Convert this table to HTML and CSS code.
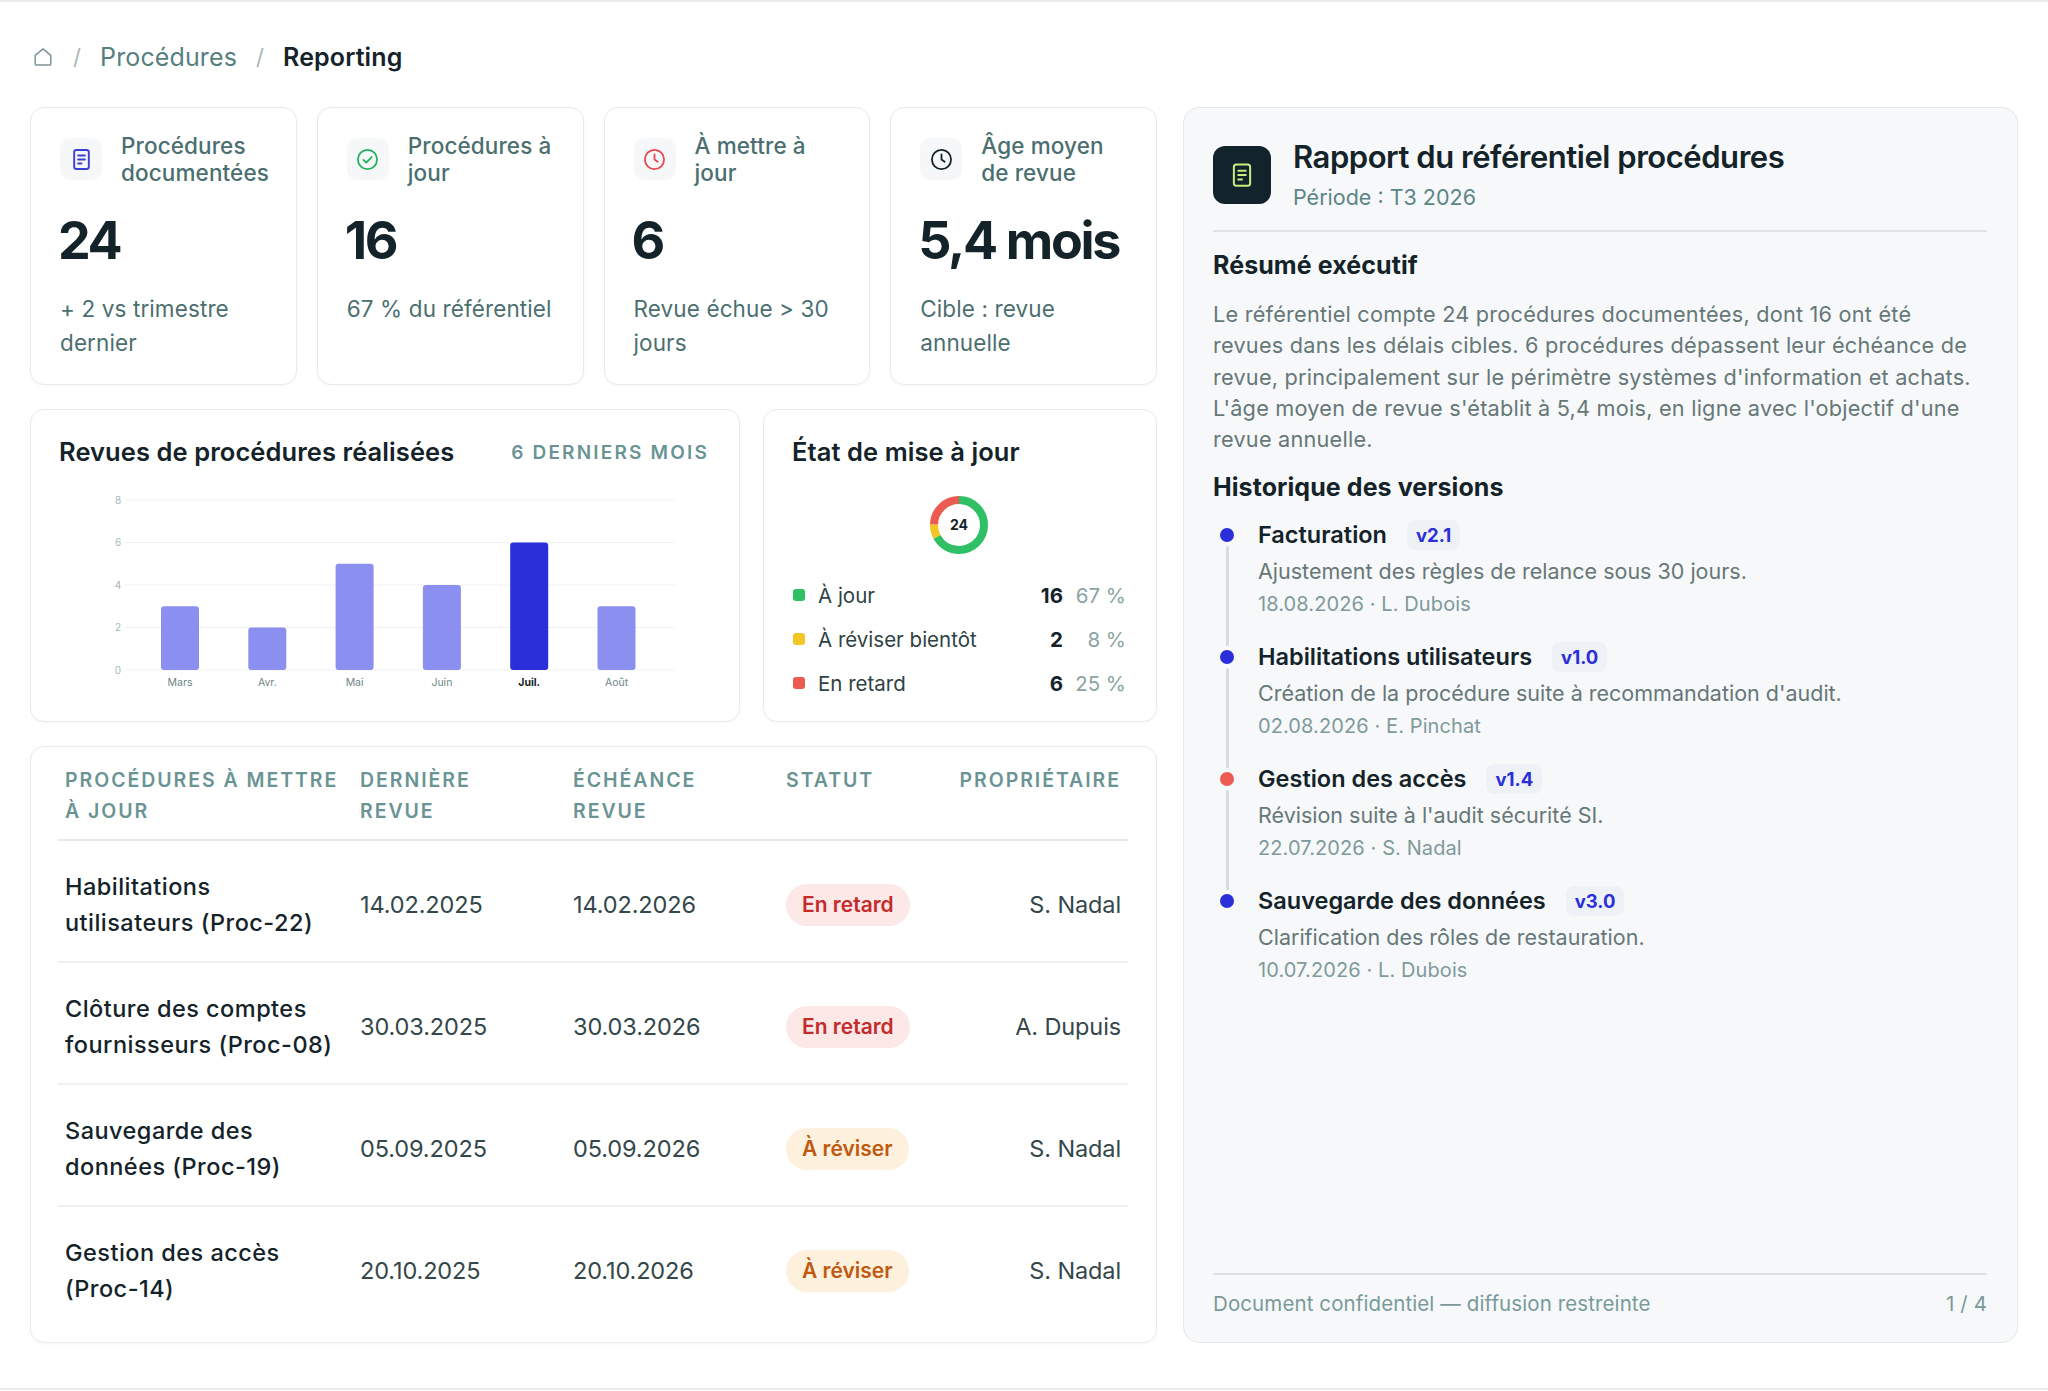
FILE: index.html
```html
<!DOCTYPE html>
<html lang="fr">
<head>
<meta charset="utf-8">
<title>Reporting — Procédures</title>
<link rel="stylesheet" href="styles.css">
</head>
<body>
<div class="page">
  <nav class="crumbs">
    <svg class="home" viewBox="0 0 24 24" width="22" height="22" fill="none" stroke="#7d9494" stroke-width="1.6" stroke-linejoin="round"><path d="M3.5 10.2 12 3.2l8.5 7V19.5a1.3 1.3 0 0 1-1.3 1.3H4.8a1.3 1.3 0 0 1-1.3-1.3Z"/></svg>
    <span class="sep">/</span>
    <span class="crumb">Procédures</span>
    <span class="sep">/</span>
    <span class="crumb current">Reporting</span>
  </nav>

  <div class="layout">
    <div class="main">
      <div class="kpis">
        <div class="card kpi">
          <div class="kpi-head">
            <span class="kpi-icon">
              <svg viewBox="0 0 24 24" width="27" height="27" fill="none" stroke="#3b3fd8" stroke-width="1.7" stroke-linecap="round"><rect x="5.5" y="3.5" width="13" height="17" rx="2"/><path d="M9 8.5h6M9 12h6M9 15.5h3"/></svg>
            </span>
            <span class="kpi-label">Procédures<br>documentées</span>
          </div>
          <div class="kpi-value">24</div>
          <div class="kpi-sub">+ 2 vs trimestre<br>dernier</div>
        </div>
        <div class="card kpi">
          <div class="kpi-head">
            <span class="kpi-icon">
              <svg viewBox="0 0 24 24" width="27" height="27" fill="none" stroke="#22b35a" stroke-width="1.6" stroke-linecap="round" stroke-linejoin="round"><circle cx="12" cy="12" r="8.5"/><path d="m8.4 12.3 2.5 2.5 4.8-5"/></svg>
            </span>
            <span class="kpi-label">Procédures à<br>jour</span>
          </div>
          <div class="kpi-value">16</div>
          <div class="kpi-sub">67 % du référentiel</div>
        </div>
        <div class="card kpi">
          <div class="kpi-head">
            <span class="kpi-icon">
              <svg viewBox="0 0 24 24" width="27" height="27" fill="none" stroke="#e5484d" stroke-width="1.6" stroke-linecap="round" stroke-linejoin="round"><circle cx="12" cy="12" r="8.5"/><path d="M12 7.5V12l2.8 2"/></svg>
            </span>
            <span class="kpi-label">À mettre à<br>jour</span>
          </div>
          <div class="kpi-value">6</div>
          <div class="kpi-sub">Revue échue &gt; 30<br>jours</div>
        </div>
        <div class="card kpi">
          <div class="kpi-head">
            <span class="kpi-icon">
              <svg viewBox="0 0 24 24" width="27" height="27" fill="none" stroke="#142329" stroke-width="1.6" stroke-linecap="round" stroke-linejoin="round"><circle cx="12" cy="12" r="8.5"/><path d="M12 7.5V12l2.8 2"/></svg>
            </span>
            <span class="kpi-label">Âge moyen<br>de revue</span>
          </div>
          <div class="kpi-value">5,4 mois</div>
          <div class="kpi-sub">Cible : revue<br>annuelle</div>
        </div>
      </div>

      <div class="charts">
        <section class="card chart-card">
          <div class="card-head">
            <h2 class="card-title">Revues de procédures réalisées</h2>
            <span class="card-tag">6 derniers mois</span>
          </div>
          <svg class="bars" viewBox="0 0 650 210" width="650" height="210">
            <g class="grid" stroke="#eef1f3" stroke-width="1">
              <line x1="66" y1="14" x2="616" y2="14"/>
              <line x1="66" y1="56.5" x2="616" y2="56.5"/>
              <line x1="66" y1="99" x2="616" y2="99"/>
              <line x1="66" y1="141.5" x2="616" y2="141.5"/>
              <line x1="66" y1="184" x2="616" y2="184"/>
            </g>
            <g class="ylab" font-size="10" fill="#a9b6b6" text-anchor="middle">
              <text x="59" y="17.5">8</text>
              <text x="59" y="60">6</text>
              <text x="59" y="102.5">4</text>
              <text x="59" y="145">2</text>
              <text x="59" y="187.5">0</text>
            </g>
            <g fill="#8b8ff0">
              <rect x="102" y="120.25" width="38" height="63.75" rx="3"/>
              <rect x="189.3" y="141.5" width="38" height="42.5" rx="3"/>
              <rect x="276.6" y="77.75" width="38" height="106.25" rx="3"/>
              <rect x="363.9" y="99" width="38" height="85" rx="3"/>
              <rect x="451.2" y="56.5" width="38" height="127.5" rx="3" fill="#2b2fd9"/>
              <rect x="538.5" y="120.25" width="38" height="63.75" rx="3"/>
            </g>
            <g class="xlab" font-size="10.5" fill="#6f8686" text-anchor="middle">
              <text x="121" y="200">Mars</text>
              <text x="208.3" y="200">Avr.</text>
              <text x="295.6" y="200">Mai</text>
              <text x="382.9" y="200">Juin</text>
              <text x="470.2" y="200" fill="#142329" font-weight="700">Juil.</text>
              <text x="557.5" y="200">Août</text>
            </g>
          </svg>
        </section>

        <section class="card status-card">
          <h2 class="card-title">État de mise à jour</h2>
          <div class="donut">
            <svg viewBox="0 0 58 58" width="58" height="58">
              <g transform="rotate(-90 29 29)" fill="none" stroke-width="8">
                <circle cx="29" cy="29" r="25" stroke="#2fbf64" stroke-dasharray="104.72 157.08"/>
                <circle cx="29" cy="29" r="25" stroke="#f2c624" stroke-dasharray="13.09 157.08" stroke-dashoffset="-104.72"/>
                <circle cx="29" cy="29" r="25" stroke="#ec5b52" stroke-dasharray="39.27 157.08" stroke-dashoffset="-117.81"/>
              </g>
              <text x="29" y="34" text-anchor="middle" font-size="14" font-weight="700" fill="#142329">24</text>
            </svg>
          </div>
          <ul class="legend">
            <li><span class="swatch green"></span><span class="lg-label">À jour</span><span class="lg-count">16</span><span class="lg-pct">67 %</span></li>
            <li><span class="swatch yellow"></span><span class="lg-label">À réviser bientôt</span><span class="lg-count">2</span><span class="lg-pct">8 %</span></li>
            <li><span class="swatch red"></span><span class="lg-label">En retard</span><span class="lg-count">6</span><span class="lg-pct">25 %</span></li>
          </ul>
        </section>
      </div>

      <section class="card table-card">
        <table class="procs">
          <colgroup>
            <col class="c-name"><col class="c-date"><col class="c-date"><col class="c-status"><col>
          </colgroup>
          <thead>
            <tr>
              <th>Procédures à mettre<br>à jour</th>
              <th>Dernière<br>revue</th>
              <th>Échéance<br>revue</th>
              <th>Statut</th>
              <th class="right">Propriétaire</th>
            </tr>
          </thead>
          <tbody>
            <tr>
              <td class="name">Habilitations<br>utilisateurs (Proc-22)</td>
              <td>14.02.2025</td>
              <td>14.02.2026</td>
              <td><span class="badge late">En retard</span></td>
              <td class="right">S. Nadal</td>
            </tr>
            <tr>
              <td class="name">Clôture des comptes<br>fournisseurs (Proc-08)</td>
              <td>30.03.2025</td>
              <td>30.03.2026</td>
              <td><span class="badge late">En retard</span></td>
              <td class="right">A. Dupuis</td>
            </tr>
            <tr>
              <td class="name">Sauvegarde des<br>données (Proc-19)</td>
              <td>05.09.2025</td>
              <td>05.09.2026</td>
              <td><span class="badge review">À réviser</span></td>
              <td class="right">S. Nadal</td>
            </tr>
            <tr>
              <td class="name">Gestion des accès<br>(Proc-14)</td>
              <td>20.10.2025</td>
              <td>20.10.2026</td>
              <td><span class="badge review">À réviser</span></td>
              <td class="right">S. Nadal</td>
            </tr>
          </tbody>
        </table>
      </section>
    </div>

    <aside class="report">
      <header class="report-head">
        <span class="report-icon">
          <svg viewBox="0 0 24 24" width="30" height="30" fill="none" stroke="#c9ec7e" stroke-width="1.6" stroke-linecap="round"><rect x="5.5" y="3.5" width="13" height="17" rx="2"/><path d="M9 8.5h6M9 12h6M9 15.5h3"/></svg>
        </span>
        <div>
          <h1 class="report-title">Rapport du référentiel procédures</h1>
          <div class="report-period">Période : T3 2026</div>
        </div>
      </header>

      <h3 class="report-h">Résumé exécutif</h3>
      <p class="report-text">Le référentiel compte 24 procédures documentées, dont 16 ont été<br>revues dans les délais cibles. 6 procédures dépassent leur échéance de<br>revue, principalement sur le périmètre systèmes d'information et achats.<br>L'âge moyen de revue s'établit à 5,4 mois, en ligne avec l'objectif d'une<br>revue annuelle.</p>

      <h3 class="report-h history">Historique des versions</h3>
      <ol class="timeline">
        <li>
          <span class="marker"><span class="dot blue"></span><span class="rail"></span></span>
          <div class="entry">
            <div class="entry-title">Facturation <span class="ver">v2.1</span></div>
            <div class="entry-desc">Ajustement des règles de relance sous 30 jours.</div>
            <div class="entry-meta">18.08.2026 · L. Dubois</div>
          </div>
        </li>
        <li>
          <span class="marker"><span class="dot blue"></span><span class="rail"></span></span>
          <div class="entry">
            <div class="entry-title">Habilitations utilisateurs <span class="ver">v1.0</span></div>
            <div class="entry-desc">Création de la procédure suite à recommandation d'audit.</div>
            <div class="entry-meta">02.08.2026 · E. Pinchat</div>
          </div>
        </li>
        <li>
          <span class="marker"><span class="dot red"></span><span class="rail"></span></span>
          <div class="entry">
            <div class="entry-title">Gestion des accès <span class="ver">v1.4</span></div>
            <div class="entry-desc">Révision suite à l'audit sécurité SI.</div>
            <div class="entry-meta">22.07.2026 · S. Nadal</div>
          </div>
        </li>
        <li>
          <span class="marker"><span class="dot blue"></span></span>
          <div class="entry">
            <div class="entry-title">Sauvegarde des données <span class="ver">v3.0</span></div>
            <div class="entry-desc">Clarification des rôles de restauration.</div>
            <div class="entry-meta">10.07.2026 · L. Dubois</div>
          </div>
        </li>
      </ol>

      <footer class="report-foot">
        <span>Document confidentiel — diffusion restreinte</span>
        <span>1 / 4</span>
      </footer>
    </aside>
  </div>
</div>
</body>
</html>
```

FILE: styles.css
```css
* { box-sizing: border-box; }
html, body { margin: 0; padding: 0; }
body {
  font-family: Inter, "Noto Sans", sans-serif;
  color: #142329;
  background: #ffffff;
}

.page {
  height: 1390px;
  border-top: 2px solid #eaedef;
  border-bottom: 2px solid #eaedef;
  padding: 39px 30px 0 30px;
}

/* breadcrumb */
.crumbs {
  display: flex;
  align-items: center;
  gap: 19px;
  height: 32px;
  font-size: 25px;
  line-height: 32px;
  padding-left: 2px;
  margin-bottom: 34px;
  letter-spacing: 0.005em;
}
.crumbs .home { display: block; }
.crumbs .sep { color: #a9b6b8; font-size: 22px; }
.crumbs .crumb { color: #567f80; }
.crumbs .current { color: #142329; font-weight: 600; }

/* layout */
.layout {
  display: grid;
  grid-template-columns: 1127px 835px;
  gap: 26px;
  align-items: stretch;
}
.main {
  display: flex;
  flex-direction: column;
  gap: 24px;
}

.card {
  background: #ffffff;
  border: 1px solid #e7ebed;
  border-radius: 14px;
  box-shadow: 0 1px 3px rgba(20, 40, 50, 0.04);
}

/* KPI */
.kpis {
  display: grid;
  grid-template-columns: repeat(4, 1fr);
  gap: 20px;
}
.kpi { padding: 24px 18px 24px 29px; }
.kpi-head {
  display: flex;
  align-items: center;
  gap: 19px;
}
.kpi-icon {
  flex: none;
  width: 42px;
  height: 42px;
  border-radius: 10px;
  background: #f5f7f8;
  display: flex;
  align-items: center;
  justify-content: center;
}
.kpi-label {
  font-size: 22.5px;
  line-height: 27px;
  font-weight: 500;
  color: #4b6f70;
  letter-spacing: 0.005em;
  white-space: nowrap;
}
.kpi-value {
  margin-top: 24px;
  margin-left: -2px;
  font-size: 52px;
  line-height: 62px;
  font-weight: 700;
  letter-spacing: -0.045em;
  color: #142329;
  white-space: nowrap;
}
.kpi-sub {
  margin-top: 20px;
  font-size: 22.5px;
  line-height: 34px;
  color: #4b6f70;
  letter-spacing: 0.005em;
  white-space: nowrap;
}

/* charts row */
.charts {
  display: grid;
  grid-template-columns: 710px 1fr;
  gap: 23px;
}
.card-head {
  display: flex;
  align-items: center;
  justify-content: space-between;
}
.card-title {
  margin: 0;
  font-size: 25.5px;
  line-height: 32px;
  font-weight: 600;
  letter-spacing: 0.003em;
  color: #142329;
}
.card-tag {
  font-size: 19px;
  font-weight: 600;
  text-transform: uppercase;
  letter-spacing: 0.115em;
  color: #6a9494;
}
.chart-card { padding: 26px 30px 24px 28px; }
.bars { display: block; margin-top: 18px; font-family: Inter, "Noto Sans", sans-serif; }

.status-card { padding: 26px 30px 16px 28px; }
.donut {
  display: flex;
  justify-content: center;
  margin-top: 28px;
}
.donut svg { display: block; font-family: Inter, "Noto Sans", sans-serif; }
.legend {
  list-style: none;
  margin: 19px 0 0 1px;
  padding: 0;
}
.legend li {
  display: flex;
  align-items: center;
  height: 44px;
  font-size: 20.5px;
  letter-spacing: 0;
}
.swatch {
  width: 12px;
  height: 12px;
  border-radius: 3px;
  margin-right: 13px;
  flex: none;
}
.swatch.green { background: #2fbf64; }
.swatch.yellow { background: #f2c624; }
.swatch.red { background: #ec5b52; }
.lg-label { flex: 1; color: #2f4244; }
.lg-count { font-weight: 700; color: #142329; }
.lg-pct {
  width: 52px;
  margin-left: 11px;
  text-align: right;
  color: #8ba4a4;
}

/* table */
.table-card { padding: 16px 28px 15px 27px; }
.procs {
  width: 100%;
  border-collapse: collapse;
  table-layout: fixed;
}
.procs col.c-name { width: 295px; }
.procs col.c-date { width: 213px; }
.procs col.c-status { width: 170px; }
.procs th {
  text-align: left;
  vertical-align: top;
  font-size: 19.5px;
  line-height: 31px;
  font-weight: 600;
  letter-spacing: 0.1em;
  text-transform: uppercase;
  color: #6a9494;
  padding: 2px 7px 12px 7px;
  border-bottom: 2px solid #e3e8ea;
  white-space: nowrap;
}
.procs td {
  padding: 28px 7px 20px 7px;
  font-size: 23.5px;
  line-height: 36px;
  color: #34474a;
  vertical-align: middle;
  border-bottom: 2px solid #eef1f2;
  letter-spacing: -0.005em;
  white-space: nowrap;
}
.procs tbody tr:last-child td { border-bottom: none; }
.procs td.name { font-weight: 500; color: #142329; letter-spacing: 0.02em; }
.procs .right { text-align: right; }
.badge {
  display: inline-block;
  padding: 6px 16px;
  border-radius: 999px;
  font-size: 21px;
  line-height: 30px;
  font-weight: 600;
  letter-spacing: 0;
}
.badge.late { background: #fde8e8; color: #c42b2b; }
.badge.review { background: #fdf0dc; color: #c05a10; }

/* report panel */
.report {
  background: #f6f8fa;
  border: 1px solid #e5e9ec;
  border-radius: 16px;
  padding: 29px 30px 23px 29px;
  display: flex;
  flex-direction: column;
}
.report-head {
  display: flex;
  align-items: center;
  gap: 22px;
  padding-bottom: 18px;
  border-bottom: 2px solid #dde3e6;
}
.report-icon {
  flex: none;
  width: 58px;
  height: 58px;
  border-radius: 12px;
  background: #13232b;
  display: flex;
  align-items: center;
  justify-content: center;
}
.report-title {
  margin: 0;
  font-size: 31px;
  line-height: 40px;
  font-weight: 600;
  letter-spacing: -0.015em;
  color: #142329;
}
.report-period {
  margin-top: 5px;
  font-size: 21.5px;
  line-height: 30px;
  color: #5b8586;
  letter-spacing: 0;
}
.report-h {
  margin: 17px 0 0;
  font-size: 25px;
  line-height: 32px;
  font-weight: 700;
  letter-spacing: 0.003em;
  color: #142329;
}
.report-h.history { margin-top: 16px; }
.report-text {
  margin: 18px 0 0;
  font-size: 21.7px;
  line-height: 31.3px;
  color: #667777;
  letter-spacing: 0.01em;
  white-space: nowrap;
}

.timeline {
  list-style: none;
  margin: 15px 0 0;
  padding: 0;
}
.timeline li { display: flex; }
.marker {
  flex: none;
  width: 28px;
  display: flex;
  flex-direction: column;
  align-items: center;
}
.dot {
  width: 14px;
  height: 14px;
  border-radius: 50%;
  margin-top: 10px;
  flex: none;
}
.dot.blue { background: #2b2fd9; }
.dot.red { background: #ec5b52; }
.rail {
  flex: 1;
  width: 3px;
  margin-top: 4px;
  margin-bottom: -6px;
  background: #d6dde0;
  border-radius: 2px;
}
.entry {
  margin-left: 17px;
  padding-bottom: 19px;
}
.entry-title {
  font-size: 23.5px;
  line-height: 34px;
  font-weight: 600;
  letter-spacing: 0;
  color: #142329;
}
.ver {
  display: inline-block;
  margin-left: 14px;
  padding: 0 9px;
  border-radius: 8px;
  background: #eef1f6;
  color: #2b2fd9;
  font-size: 18.5px;
  line-height: 30px;
  font-weight: 700;
  letter-spacing: 0;
  vertical-align: 1px;
}
.entry-desc {
  margin-top: 3px;
  font-size: 21.5px;
  line-height: 33px;
  color: #667777;
  letter-spacing: 0;
}
.entry-meta {
  font-size: 20px;
  line-height: 33px;
  color: #7f9a9a;
  letter-spacing: 0.005em;
}

.report-foot {
  margin-top: auto;
  border-top: 2px solid #dbe2e5;
  padding-top: 14px;
  display: flex;
  justify-content: space-between;
  font-size: 20.5px;
  line-height: 30px;
  color: #7a9a9a;
  letter-spacing: 0.005em;
}
```
